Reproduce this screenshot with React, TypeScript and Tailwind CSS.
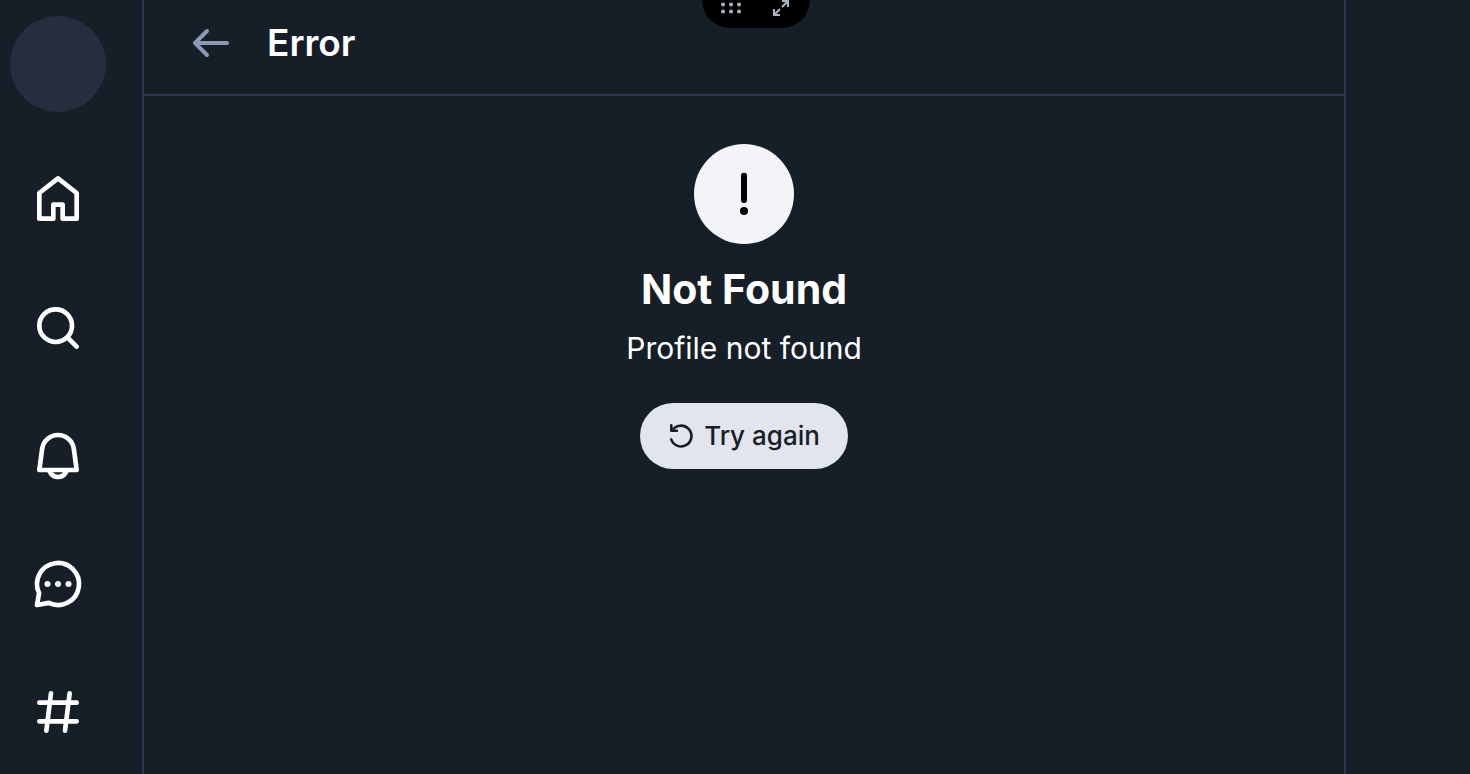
import type { ReactNode } from "react";

type IconProps = { children: ReactNode };

function NavIcon({ children }: IconProps) {
  return (
    <svg
      className="size-14"
      viewBox="0 0 24 24"
      fill="none"
      stroke="currentColor"
      strokeWidth="2"
      strokeLinecap="round"
      strokeLinejoin="round"
      aria-hidden="true"
    >
      {children}
    </svg>
  );
}

const navItems: { label: string; href: string; icon: ReactNode }[] = [
  {
    label: "Home",
    href: "#home",
    icon: <path d="M4 9l8-6.3L20 9v11h-6v-6h-4v6H4Z" />,
  },
  {
    label: "Search",
    href: "#search",
    icon: (
      <>
        <circle cx="11" cy="11" r="7" />
        <path d="M16 16l4 4" />
      </>
    ),
  },
  {
    label: "Notifications",
    href: "#notifications",
    icon: (
      <>
        <path d="M4 18L5.207 8.947a6.853 6.853 0 0 1 13.586 0L20 18Z" />
        <path d="M8.4 18.6C9.2 20.2 10.5 21 12 21s2.8-.8 3.6-2.4" />
      </>
    ),
  },
  {
    label: "Chat",
    href: "#chat",
    icon: (
      <>
        <path d="M3.9 15.9a9 9 0 1 1 4.2 4.2L3 21Z" />
        <g fill="currentColor" stroke="none">
          <circle cx="7.5" cy="12" r="1.3" />
          <circle cx="12" cy="12" r="1.3" />
          <circle cx="16.5" cy="12" r="1.3" />
        </g>
      </>
    ),
  },
  {
    label: "Feeds",
    href: "#feeds",
    icon: <path d="M4 8h16M4 16h16M9 4L7 20M17 4l-2 16" />,
  },
];

function Sidebar() {
  return (
    <nav
      aria-label="Main"
      className="flex w-36 shrink-0 flex-col gap-15 border-r-2 border-[#2c3850] pt-4 pl-2.5"
    >
      <a
        href="#profile"
        aria-label="Profile"
        className="size-24 shrink-0 rounded-full bg-[#252e3e]"
      />
      <div className="flex w-24 flex-col items-center gap-18">
        {navItems.map((item) => (
          <a key={item.label} href={item.href} aria-label={item.label} className="text-white">
            <NavIcon>{item.icon}</NavIcon>
          </a>
        ))}
      </div>
    </nav>
  );
}

function FloatingControls() {
  return (
    <div className="absolute top-0 left-1/2 ml-[-33px] flex h-7 w-[108px] items-start justify-between rounded-b-[28px] bg-black px-[18px] text-[#aab4c3]">
      <button type="button" aria-label="Move window">
        <svg className="h-4 w-[22px]" viewBox="0 0 22 16" fill="currentColor" aria-hidden="true">
          <circle cx="3" cy="4.5" r="2" />
          <circle cx="11" cy="4.5" r="2" />
          <circle cx="19" cy="4.5" r="2" />
          <circle cx="3" cy="11.5" r="2" />
          <circle cx="11" cy="11.5" r="2" />
          <circle cx="19" cy="11.5" r="2" />
        </svg>
      </button>
      <button type="button" aria-label="Expand window">
        <svg
          className="h-[18px] w-[22px]"
          viewBox="0 0 22 18"
          fill="none"
          stroke="currentColor"
          strokeWidth="2"
          aria-hidden="true"
        >
          <path d="M12 1h6v6M18 1l-6 6M4 9v6h6M4 15l6-6" />
        </svg>
      </button>
    </div>
  );
}

export default function App() {
  return (
    <div className="relative flex min-h-screen bg-[#161e27] font-['Inter',sans-serif] text-white">
      <Sidebar />
      <main className="flex min-w-0 flex-1 flex-col">
        <header className="flex h-24 items-center gap-8 border-b-2 border-[#2c3850] pb-2 pl-[43px]">
          <button type="button" aria-label="Back" className="text-[#8c9ab4]">
            <svg
              className="size-12"
              viewBox="0 0 24 24"
              fill="none"
              stroke="currentColor"
              strokeWidth="2"
              strokeLinecap="round"
              strokeLinejoin="round"
              aria-hidden="true"
            >
              <path d="M20 12H4M10 6l-6 6 6 6" />
            </svg>
          </button>
          <h1 className="text-[37px] leading-[50px] font-semibold">Error</h1>
        </header>
        <section className="flex flex-col items-center pt-12 text-center">
          <div className="flex size-[100px] items-center justify-center rounded-full bg-[#f3f4f8] text-black">
            <svg className="size-12" viewBox="0 0 48 48" fill="currentColor" aria-hidden="true">
              <rect x="21" y="2.7" width="6" height="30.3" rx="3" />
              <circle cx="24" cy="41" r="4" />
            </svg>
          </div>
          <h2 className="mt-5 text-[41px] leading-[50px] font-bold">Not Found</h2>
          <p className="mt-3.5 text-[30px] leading-10">Profile not found</p>
          <button
            type="button"
            className="mt-[35px] flex h-[66px] items-center gap-2.5 rounded-full bg-[#e2e5ed] px-7 text-[26px] leading-8 font-medium text-[#161e27]"
          >
            <svg
              className="size-[26px]"
              viewBox="0 0 26 26"
              fill="none"
              stroke="currentColor"
              strokeWidth="2.6"
              strokeLinecap="round"
              strokeLinejoin="round"
              aria-hidden="true"
            >
              <path d="M3.3 2.3v5.5h5.6" />
              <path d="M4.2 7.6a10.4 10.4 0 1 1-1 8.8" />
            </svg>
            Try again
          </button>
        </section>
      </main>
      <aside className="w-[126px] shrink-0 border-l-2 border-[#2c3850]" />
      <FloatingControls />
    </div>
  );
}
